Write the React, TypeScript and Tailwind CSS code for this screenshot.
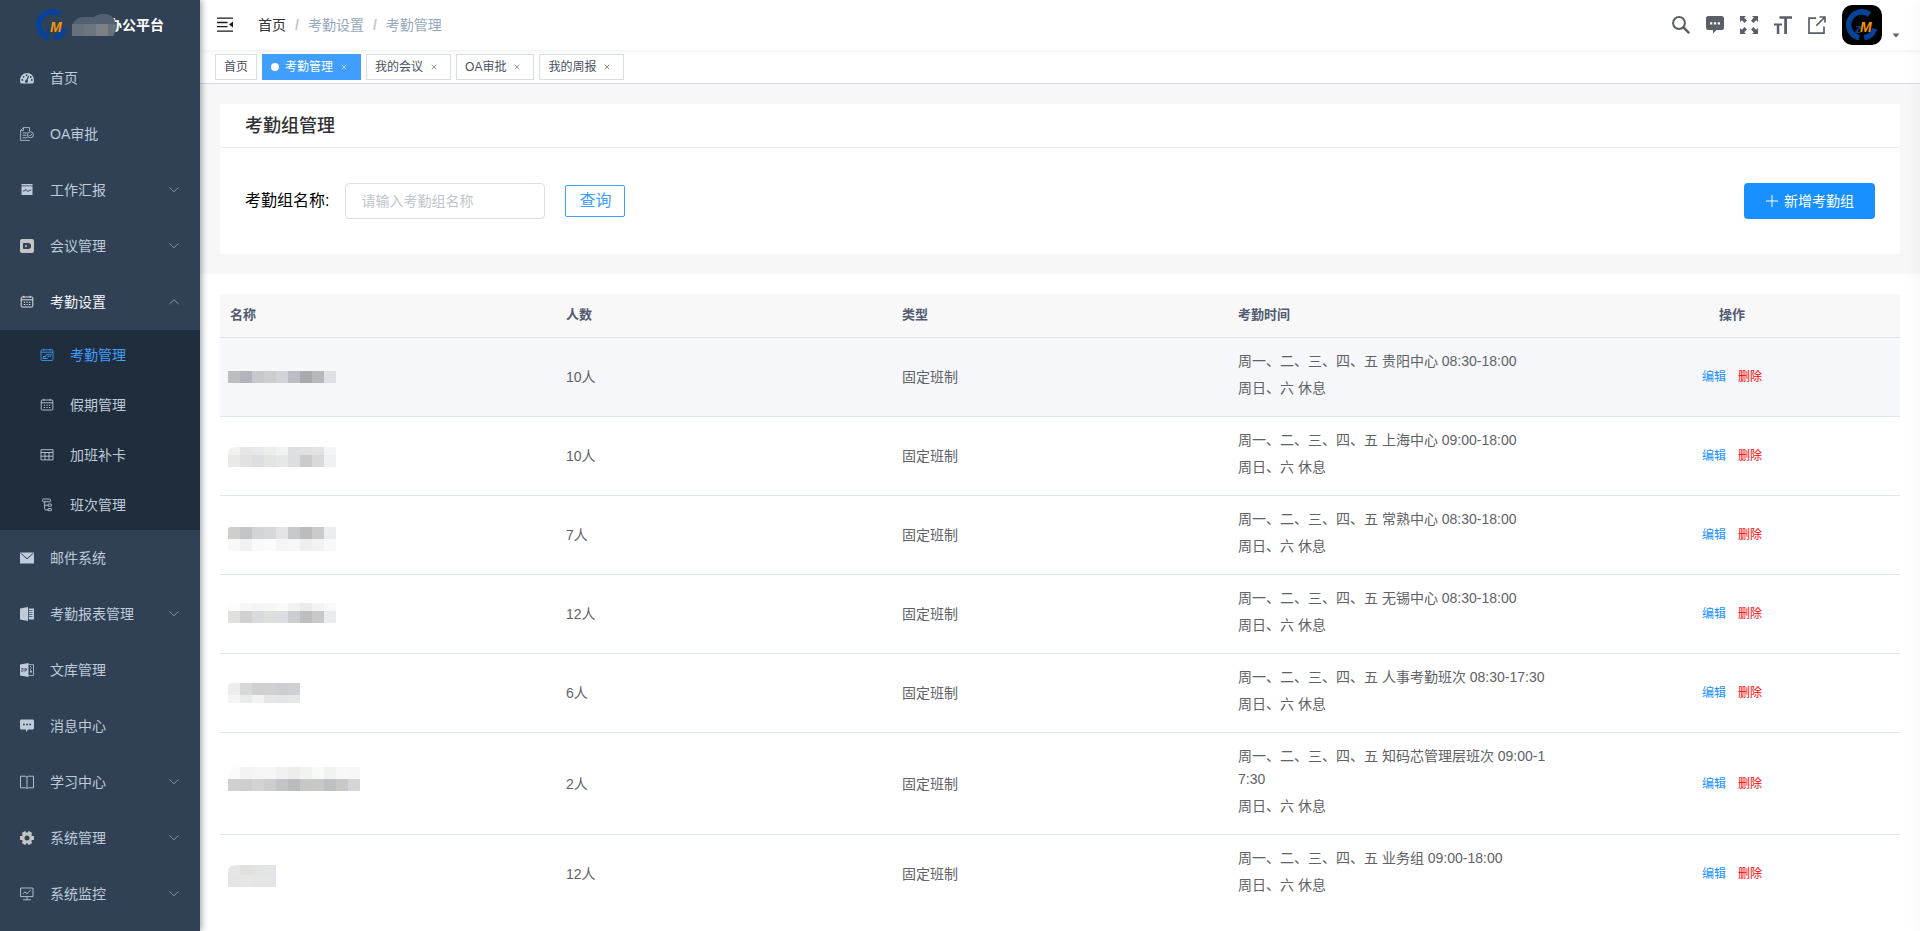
import type { ReactNode } from "react"

type IconProps = { className?: string }

type MenuItem = {
  title: string
  icon: ReactNode
  expandable?: boolean
  open?: boolean
  active?: boolean
  children?: MenuItem[]
}

type MaskRow = { y: number; h: number; colors: string[] }

type AttendanceGroup = {
  id: number
  count: string
  type: string
  work: string
  rest: string
  mask: MaskRow[]
  maskRadius: number
}

function SmallIcon({ children, className = "" }: { children: ReactNode; className?: string }) {
  return (
    <svg viewBox="0 0 14 14" className={`size-3.5 shrink-0 ${className}`} fill="none" stroke="currentColor" aria-hidden="true">
      {children}
    </svg>
  )
}

const icons = {
  dashboard: (
    <SmallIcon>
      <path d="M.8 12.600A6.700 6.700 0 0 1 0 9a7 7 0 0 1 14 0c0 1.300-.3 2.500-.8 3.600Z" fill="currentColor" stroke="none" />
      <path d="M6.500 9.800 8.600 5" stroke="#304156" strokeWidth="1.200" />
      <g fill="#304156" stroke="none">
        <circle cx="6.500" cy="10.200" r="1.500" />
        <circle cx="2.300" cy="9" r=".9" />
        <circle cx="3.600" cy="5.800" r=".9" />
        <circle cx="6.600" cy="4.200" r=".9" />
        <circle cx="10.800" cy="6" r=".9" />
        <circle cx="11.800" cy="9" r=".9" />
      </g>
    </SmallIcon>
  ),
  approve: (
    <SmallIcon>
      <path d="M9.500 4V.6H3.300L.6 3.300v10.100h9.200M.6 3.500h2.900V.6M2.600 6h4.600M2.600 8.300h4M2.600 10.700h5" strokeWidth=".8" />
      <circle cx="10.400" cy="7.800" r="3" strokeWidth=".8" />
      <path d="m9 7.800 1.100 1.100L12 7" strokeWidth=".8" />
    </SmallIcon>
  ),
  report: (
    <SmallIcon>
      <path d="M1.500 1h11v1.600h-11zM1.500 3.300h11V12h-11z" fill="currentColor" stroke="none" />
      <path d="M2.800 8h1.800l1.200-1.800L8 8.800l1.300-1.600h1.900" stroke="#304156" strokeWidth=".9" />
    </SmallIcon>
  ),
  meeting: (
    <SmallIcon className="text-[#c4c4c4]">
      <rect width="14" height="14" rx="2" fill="currentColor" stroke="none" />
      <path d="M4 4h4.500c1 0 1.500.5 1.500 1.500l1-.5v4l-1-.5c0 1-.5 1.500-1.500 1.500H4c-.7 0-1-.3-1-1V5c0-.7.300-1 1-1Z" fill="#304156" stroke="none" />
      <path d="m5.300 5.600 2.300 1.400-2.300 1.400Z" fill="currentColor" stroke="none" />
    </SmallIcon>
  ),
  calendar: (
    <SmallIcon>
      <rect x="1.200" y="2" width="11.600" height="10" rx="1" strokeWidth=".9" />
      <path d="M1.200 4.800h11.600M3.800.8v2M10.200.8v2" strokeWidth=".9" />
      <path d="M3.800 7.200h1.200M6.400 7.200h1.200M9 7.200h1.200M3.800 9.500h1.200M6.400 9.500h1.200M9 9.500h1.200" strokeWidth="1.100" />
    </SmallIcon>
  ),
  schedule: (
    <SmallIcon>
      <rect x="1" y="1.800" width="12" height="10.700" rx="1" strokeWidth=".8" />
      <path d="M1 4.200h12M3.800.6v2M10.200.6v2M2.800 10.500h5M3 8.500h3M6.500 6.700h5.300M7.500 8.500h1.800M10 8.500h1" strokeWidth=".9" />
      <path d="M2.800 10.500 7 6.500" strokeWidth=".8" />
    </SmallIcon>
  ),
  table: (
    <SmallIcon>
      <path d="M1 1.700h12v10.200H1zM1 4.500h12M1 8.200h12M5 4.500v7.400M9 4.500v7.400" strokeWidth=".9" />
    </SmallIcon>
  ),
  tree: (
    <SmallIcon>
      <rect x="2.600" y="1" width="8" height="2.700" rx=".8" strokeWidth=".9" />
      <path d="M4.600 3.700v7c0 .8.500 1.200 1.200 1.200h3M4.600 7.300h4" strokeWidth=".9" />
      <rect x="8" y="6" width="3.500" height="2.200" rx=".6" strokeWidth=".9" />
      <rect x="8" y="10.500" width="3.500" height="2.200" rx=".6" strokeWidth=".9" />
    </SmallIcon>
  ),
  mail: (
    <SmallIcon>
      <path d="M0 1.500h14v11H0z" fill="currentColor" stroke="none" />
      <path d="M.5 2 7 7.800 13.500 2" stroke="#304156" strokeWidth="1" />
    </SmallIcon>
  ),
  book: (
    <SmallIcon>
      <path d="M0 1.500 8 0v14l-8-1.500z" fill="currentColor" stroke="none" />
      <path d="M8.800 1.500H14v11H8.800z" fill="currentColor" stroke="none" />
      <path d="M9 3.500h3.500M9 5.500h3.500M9 7.500h3.500M9 9.500h3.500" stroke="#304156" strokeWidth=".7" />
    </SmallIcon>
  ),
  zip: (
    <SmallIcon>
      <path d="M0 1.500 8.500 0v14L0 12.500z" fill="currentColor" stroke="none" />
      <path d="M8.500 1.600h5v10.800h-5M10.500 3v1M11.500 4.300v1M10.500 5.600v1" strokeWidth=".8" />
      <path d="M1.300 5.500h1.600L1.300 8.300h1.600M4 5.300v3.200M5.300 8.500V5.600h1.300v1.600H5.300" stroke="#304156" strokeWidth=".7" />
      <rect x="10" y="7.500" width="1.800" height="2" fill="currentColor" stroke="none" />
    </SmallIcon>
  ),
  message: (
    <SmallIcon>
      <path d="M1.500.5h11c.9 0 1.500.6 1.500 1.500v7c0 .9-.6 1.500-1.500 1.500H8L6 13.200V10.500H1.500C.6 10.500 0 9.900 0 9V2C0 1.100.6.5 1.500.5Z" fill="currentColor" stroke="none" />
      <path d="M3 5.500h1.800M6.100 5.500h1.800M9.200 5.500H11" stroke="#304156" strokeWidth="1.400" />
    </SmallIcon>
  ),
  education: (
    <SmallIcon>
      <path d="M.5 1.200h5L7 2.200l1.500-1h5v11.600h-5L7 13.300l-1.500-.5h-5zM7 2v11" strokeWidth=".9" />
    </SmallIcon>
  ),
  gear: (
    <SmallIcon className="text-[#c4c4c4]">
      <g stroke="currentColor" strokeWidth="4">
        <path d="M3.500.9 10.500 13.100M10.500.9 3.500 13.100M0 7h14" />
      </g>
      <circle cx="7" cy="7" r="5.400" fill="currentColor" stroke="none" />
      <circle cx="7" cy="7" r="2.500" fill="#304156" stroke="none" />
    </SmallIcon>
  ),
  monitor: (
    <SmallIcon>
      <path d="M.6 1h12.400v8.600H.6zM7 9.600v3M3 12.800h8M3 6.800l2-2 1.800 2L10.800 3" strokeWidth=".9" />
    </SmallIcon>
  ),
}

const menu: MenuItem[] = [
  { title: "首页", icon: icons.dashboard },
  { title: "OA审批", icon: icons.approve },
  { title: "工作汇报", icon: icons.report, expandable: true },
  { title: "会议管理", icon: icons.meeting, expandable: true },
  {
    title: "考勤设置",
    icon: icons.calendar,
    expandable: true,
    open: true,
    children: [
      { title: "考勤管理", icon: icons.schedule, active: true },
      { title: "假期管理", icon: icons.calendar },
      { title: "加班补卡", icon: icons.table },
      { title: "班次管理", icon: icons.tree },
    ],
  },
  { title: "邮件系统", icon: icons.mail },
  { title: "考勤报表管理", icon: icons.book, expandable: true },
  { title: "文库管理", icon: icons.zip },
  { title: "消息中心", icon: icons.message },
  { title: "学习中心", icon: icons.education, expandable: true },
  { title: "系统管理", icon: icons.gear, expandable: true },
  { title: "系统监控", icon: icons.monitor, expandable: true },
]

const tabs = [
  { title: "首页", fixed: true },
  { title: "考勤管理", active: true },
  { title: "我的会议" },
  { title: "OA审批" },
  { title: "我的周报" },
]

const groups: AttendanceGroup[] = [
  {
    id: 1,
    count: "10人",
    type: "固定班制",
    work: "周一、二、三、四、五 贵阳中心 08:30-18:00",
    rest: "周日、六 休息",
    maskRadius: 0,
    mask: [{ y: 11, h: 12, colors: ["#bebec0", "#b1b4ba", "#c6cacc", "#cdcdce", "#d2d3d9", "#babdc3", "#a9aaab", "#b8b8bc", "#dde0e5"] }],
  },
  {
    id: 2,
    count: "10人",
    type: "固定班制",
    work: "周一、二、三、四、五 上海中心 09:00-18:00",
    rest: "周日、六 休息",
    maskRadius: 6,
    mask: [
      { y: 8, h: 8, colors: ["#f1f1f1", "#e6e6e6", "#e8e9ea", "#ededed", "#f2f2f2", "#e0e0e1", "#e0e0e0", "#e3e3e3", "#f5f5f6"] },
      { y: 16, h: 12, colors: ["#e9e9e8", "#e4e2e1", "#dcdee0", "#e4e4e2", "#e6e7e9", "#dddee0", "#cbcbcb", "#d9d9da", "#eff0f2"] },
    ],
  },
  {
    id: 3,
    count: "7人",
    type: "固定班制",
    work: "周一、二、三、四、五 常熟中心 08:30-18:00",
    rest: "周日、六 休息",
    maskRadius: 2,
    mask: [
      { y: 9, h: 12, colors: ["#cfcecd", "#c4c5c7", "#d3d4d6", "#d7d7d7", "#e4e4e6", "#c8c9cb", "#bcbcbc", "#cbcbcc", "#ecedef"] },
      { y: 21, h: 12, colors: ["#f9f9f9", "#f1f1f1", "#fafafa", "#fcfcfb", "#f5f5f5", "#f7f7f7", "#efefef", "#f2f2f2", "#f9f9f9"] },
    ],
  },
  {
    id: 4,
    count: "12人",
    type: "固定班制",
    work: "周一、二、三、四、五 无锡中心 08:30-18:00",
    rest: "周日、六 休息",
    maskRadius: 4,
    mask: [
      { y: 6, h: 8, colors: ["#fdfdfd", "#f7f7f7", "#f5f5f5", "#f5f7f7", "#fafafa", "#f1f3f2", "#ebebeb", "#f4f4f4", "#f9f9f9"] },
      { y: 14, h: 12, colors: ["#e0e0df", "#d0d0d0", "#d8dadc", "#dededd", "#dcdee4", "#cccdd0", "#bebebe", "#c9c9cb", "#ebecee"] },
    ],
  },
  {
    id: 5,
    count: "6人",
    type: "固定班制",
    work: "周一、二、三、四、五 人事考勤班次 08:30-17:30",
    rest: "周日、六 休息",
    maskRadius: 3,
    mask: [
      { y: 7, h: 12, colors: ["#ededed", "#d8d8d8", "#d0d0d0", "#d0d1d2", "#cdced1", "#cfd0d5"] },
      { y: 19, h: 8, colors: ["#f4f4f4", "#eaecec", "#f3f3f3", "#e6e6e7", "#e4e5e8", "#e7e7e8"] },
    ],
  },
  {
    id: 6,
    count: "2人",
    type: "固定班制",
    work: "周一、二、三、四、五 知码芯管理层班次 09:00-17:30",
    rest: "周日、六 休息",
    maskRadius: 8,
    mask: [
      { y: 0, h: 12, colors: ["#fbfbfb", "#f3f3f3", "#f5f5f5", "#f6f6f6", "#f0f0f0", "#ededed", "#f2f2f2", "#f8fafa", "#f2f2f2", "#f8f8f8", "#f7f7f7"] },
      { y: 12, h: 12, colors: ["#d0d0d1", "#cecece", "#d1d3d5", "#cccccd", "#c3c4c7", "#babbbf", "#c7c7c5", "#c8c8c6", "#bfc0c4", "#c8c9c6", "#d4d5da"] },
    ],
  },
  {
    id: 7,
    count: "12人",
    type: "固定班制",
    work: "周一、二、三、四、五 业务组 09:00-18:00",
    rest: "周日、六 休息",
    maskRadius: 6,
    mask: [
      { y: 8, h: 10, colors: ["#e6e6e7", "#e1e1df", "#e2e3e2", "#e3e4e8"] },
      { y: 18, h: 12, colors: ["#e5e5e6", "#e6e6e6", "#e5e5e5", "#e4e5e8"] },
    ],
  },
]

function BrandMark({ className }: IconProps) {
  return (
    <svg viewBox="0 0 32 32" className={className} fill="none" aria-hidden="true">
      <g stroke="#08439b" strokeWidth="5.500">
        <path d="M23.500 5.500A13 13 0 1 0 13.300 28.700" />
        <path d="M18.300 28.800A13 13 0 0 0 28.600 19.800" />
      </g>
      <text x="9" y="24" fontSize="13" className="font-['Liberation_Sans',sans-serif] font-bold italic" fill="#0d3f86">z</text>
      <text x="14" y="23" fontSize="14" className="font-['Liberation_Sans',sans-serif] font-bold italic" fill="#f0960f">M</text>
    </svg>
  )
}

function Chevron({ open }: { open?: boolean }) {
  return (
    <svg viewBox="0 0 12 12" className="ml-auto size-3 text-[#909399]" fill="none" stroke="currentColor" strokeWidth="1" aria-hidden="true">
      <path d={open ? "m1.500 8 4.500-4.200L10.500 8" : "M1.500 3.500 6 7.700l4.500-4.200"} />
    </svg>
  )
}

function NameMask({ rows, radius }: { rows: MaskRow[]; radius: number }) {
  const width = rows[0].colors.length * 12
  return (
    <svg width={width} height="34" role="img" aria-label="名称已隐藏" className="block">
      {rows.map((row, rowIndex) =>
        row.colors.map((color, i) =>
          i === 0 && rowIndex === 0 && radius > 0 ? (
            <path key={i} d={`M0 ${row.y + row.h}V${row.y + radius}Q0 ${row.y} ${radius * 1.5} ${row.y}H12V${row.y + row.h}Z`} fill={color} />
          ) : (
            <rect key={i} x={i * 12} y={row.y} width="12" height={row.h} fill={color} />
          ),
        ),
      )}
    </svg>
  )
}

function Sidebar() {
  return (
    <aside className="sticky top-0 z-20 h-screen w-[200px] shrink-0 overflow-hidden bg-[#304156] shadow-[2px_0_6px_rgba(0,21,41,0.35)]">
      <a href="#home" className="flex h-[50px] items-center pl-9">
        <BrandMark className="size-8" />
        <svg viewBox="0 0 44 22" className="z-10 ml-1 h-[22px] w-11" aria-hidden="true">
          <path d="M0 22V12C2 6 6 3 12 3h10c4-4 16-5 20 2l2 5v6l-3 6Z" fill="#526071" />
          <path d="M12 10h12v12H12z" fill="#6d7680" />
          <path d="M24 10h12v12H24z" fill="#7b8187" />
          <path d="M36 10h8v6l-3 6h-5zM0 10h12v12H0z" fill="#66717e" />
        </svg>
        <h1 className="-ml-2 text-sm font-bold text-white">办公平台</h1>
      </a>
      <nav aria-label="主菜单">
        <ul>
          {menu.map((item) => (
            <li key={item.title}>
              <a
                href="#menu"
                className={`flex h-14 items-center px-5 text-sm ${item.open ? "text-[#f4f4f5]" : "text-[#bfcbd9]"}`}
              >
                {item.icon}
                <span className="ml-4">{item.title}</span>
                {item.expandable && <Chevron open={item.open} />}
              </a>
              {item.children && (
                <ul className="bg-[#1f2d3d]">
                  {item.children.map((child) => (
                    <li key={child.title}>
                      <a
                        href="#submenu"
                        className={`flex h-[50px] items-center pl-10 text-sm ${child.active ? "text-[#409eff]" : "text-[#bfcbd9]"}`}
                      >
                        {child.icon}
                        <span className="ml-4">{child.title}</span>
                      </a>
                    </li>
                  ))}
                </ul>
              )}
            </li>
          ))}
        </ul>
      </nav>
    </aside>
  )
}

function Navbar() {
  return (
    <header className="relative z-10 flex h-[50px] items-center bg-white pr-5 pl-[17px] shadow-[0_1px_4px_rgba(0,21,41,0.08)]">
      <button type="button" aria-label="收起菜单">
        <svg viewBox="0 0 16 16" className="size-4" fill="none" stroke="#1a1a1a" strokeWidth="1.300">
          <path d="M0 1.200h16M0 5.500h10.500M0 9.700h10.500M0 14.200h16" />
          <path d="M16 4.500v6L12 7.500Z" fill="#1a1a1a" stroke="none" />
        </svg>
      </button>
      <nav aria-label="面包屑" className="ml-[25px] flex items-center gap-[9px] text-sm text-[#97a8be]">
        <a href="#home" className="text-[#303133]">首页</a>
        <span className="font-bold text-[#c0c4cc]">/</span>
        <span>考勤设置</span>
        <span className="font-bold text-[#c0c4cc]">/</span>
        <span>考勤管理</span>
      </nav>

      <div className="ml-auto flex items-center gap-4 text-[#5a5e66]">
        <button type="button" aria-label="搜索">
          <svg viewBox="0 0 18 18" className="size-[18px]" fill="none" stroke="currentColor">
            <circle cx="7" cy="7" r="5.900" strokeWidth="2" />
            <path d="m11.200 11.200 6 6" strokeWidth="2.400" />
          </svg>
        </button>
        <button type="button" aria-label="消息">
          <svg viewBox="0 0 18 18" className="size-[18px]" fill="currentColor">
            <path d="M2.500 0h13A2.500 2.500 0 0 1 18 2.500v9a2.500 2.500 0 0 1-2.500 2.500h-5L7 17.500V14H2.500A2.500 2.500 0 0 1 0 11.500v-9A2.500 2.500 0 0 1 2.500 0Z" />
            <path d="M4 6.300h2.300v2.200H4zM7.900 6.300h2.300v2.200H7.900zM11.700 6.300H14v2.200h-2.300z" fill="#fff" />
          </svg>
        </button>
        <button type="button" aria-label="全屏">
          <svg viewBox="0 0 18 18" className="size-[18px]" fill="currentColor">
            <path d="M0 0h6L4.200 1.800 7 4.600 4.600 7 1.800 4.200 0 6ZM18 0v6l-1.800-1.800L13.400 7 11 4.600l2.800-2.800L12 0ZM0 18v-6l1.800 1.800L4.600 11 7 13.400l-2.800 2.800L6 18ZM18 18h-6l1.800-1.800-2.800-2.800 2.400-2.400 2.800 2.800L18 12Z" />
          </svg>
        </button>
        <button type="button" aria-label="布局大小">
          <svg viewBox="0 0 18 18" className="size-[18px]" fill="currentColor">
            <path d="M5.500.3H18v2.500h-5V18h-2.800V2.800H5.500ZM0 7.500h8v2H5.300V18H2.800V9.500H0Z" />
          </svg>
        </button>
        <button type="button" aria-label="新窗口打开">
          <svg viewBox="0 0 18 18" className="size-[18px]" fill="none" stroke="currentColor" strokeWidth="1.700">
            <path d="M8 2.200H1v15h15V10.500M8.300 9.700 16.500 1.500M11.500 1H17v5.500" />
          </svg>
        </button>
        <button type="button" aria-label="用户菜单" className="flex items-end gap-[10px]">
          <span className="flex size-10 items-center justify-center rounded-[10px] bg-black">
            <BrandMark className="size-8" />
          </span>
          <svg viewBox="0 0 8 5" className="mb-[7px] h-[5px] w-2" fill="currentColor" aria-hidden="true">
            <path d="M.5.500h7L4 4.500Z" />
          </svg>
        </button>
      </div>
    </header>
  )
}

function TagsView() {
  return (
    <div className="flex h-[34px] items-center gap-[5px] border-b border-[#d8dce5] bg-white pt-px pl-[15px] text-xs">
      {tabs.map((tab) => (
        <div
          key={tab.title}
          className={`flex h-[26px] items-center border px-2 ${
            tab.active ? "border-[#409eff] bg-[#409eff] text-white" : "border-[#d8dce5] bg-white text-[#495060]"
          }`}
        >
          {tab.active && <span className="mr-[6px] size-2 rounded-full bg-white" />}
          <a href="#tab">{tab.title}</a>
          {!tab.fixed && (
            <button type="button" aria-label={`关闭${tab.title}`} className="ml-[3px] flex size-4 items-center justify-center">
              <svg viewBox="0 0 6 6" className="size-[6px]" stroke="currentColor" strokeWidth=".8" opacity=".75">
                <path d="m.7.700 4.600 4.600M5.300.7.700 5.300" />
              </svg>
            </button>
          )}
        </div>
      ))}
    </div>
  )
}

function SearchCard() {
  return (
    <section className="bg-white">
      <div className="flex h-11 items-center border-b border-[#ebebeb] px-[25px]">
        <h2 className="text-lg font-medium text-[#303133]">考勤组管理</h2>
      </div>
      <form className="flex items-center px-[25px] py-[35px]" onSubmit={(e) => e.preventDefault()}>
        <label htmlFor="group-name" className="text-base text-black">考勤组名称:</label>
        <input
          id="group-name"
          type="text"
          placeholder="请输入考勤组名称"
          className="ml-4 h-9 w-[200px] rounded border border-[#dcdfe6] bg-white px-[15px] text-sm text-[#606266] placeholder:text-[#c0c4cc]"
        />
        <button type="submit" className="ml-5 h-8 w-[60px] rounded-xs border border-[#409eff] bg-white text-base text-[#409eff]">
          查询
        </button>
        <button type="button" className="ml-auto flex h-9 items-center gap-[5px] rounded bg-[#1890ff] px-[21px] text-sm text-white">
          <svg viewBox="0 0 14 14" className="size-3.5" stroke="currentColor" strokeWidth="1" aria-hidden="true">
            <path d="M7 1v12M1 7h12" />
          </svg>
          新增考勤组
        </button>
      </form>
    </section>
  )
}

function GroupTable() {
  return (
    <table className="w-full table-fixed border-separate border-spacing-0 text-sm text-[#606266]">
      <thead>
        <tr className="h-11 bg-[#f8f8f9] text-left text-[13px] text-[#515a6e] [&>th]:border-b [&>th]:border-[#dfe6ec] [&>th]:px-[10px] [&>th]:font-bold">
          <th>名称</th>
          <th>人数</th>
          <th>类型</th>
          <th>考勤时间</th>
          <th className="text-center">操作</th>
        </tr>
      </thead>
      <tbody>
        {groups.map((group) => (
          <tr
            key={group.id}
            className="first:bg-[#f5f7fa] [&>td]:border-b [&>td]:border-[#dfe6ec] last:[&>td]:border-transparent"
          >
            <td className="px-2 py-3">
              <NameMask rows={group.mask} radius={group.maskRadius} />
            </td>
            <td className="px-[10px] py-3">{group.count}</td>
            <td className="px-[10px] py-3">{group.type}</td>
            <td className="px-[10px] py-3 leading-[23px] break-all">
              <p className="mb-1 pr-1">{group.work}</p>
              <p className="mb-1 pr-1">{group.rest}</p>
            </td>
            <td className="px-[10px] py-3">
              <div className="flex justify-center gap-3 text-xs">
                <button type="button" className="text-[#1890ff]">编辑</button>
                <button type="button" className="text-[#ff0000]">删除</button>
              </div>
            </td>
          </tr>
        ))}
      </tbody>
    </table>
  )
}

export default function App() {
  return (
    <div className="flex min-h-screen bg-white font-['Liberation_Sans','Noto_Sans_CJK_SC',sans-serif]">
      <Sidebar />
      <div className="min-w-0 flex-1">
        <Navbar />
        <TagsView />
        <main>
          <div className="bg-[#f7f7f7] p-5">
            <SearchCard />
          </div>
          <div className="px-5 pt-5">
            <GroupTable />
          </div>
        </main>
      </div>
      {/* closed settings drawer, only its shadow reaches the page */}
      <div className="fixed inset-y-0 left-full z-30 w-[260px] shadow-[0_0_15px_rgba(0,0,0,0.05)]" />
    </div>
  )
}
